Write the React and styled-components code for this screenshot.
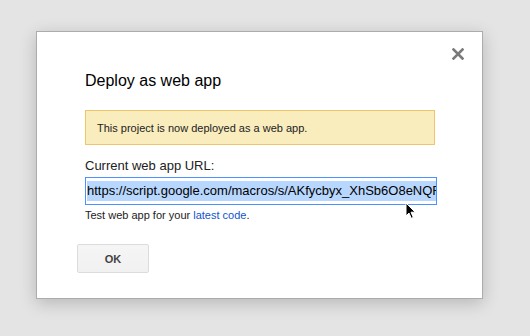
import React from "react";
import styled, { createGlobalStyle } from "styled-components";

const Global = createGlobalStyle`
  html, body {
    margin: 0;
    padding: 0;
    background: #e4e4e4;
    font-family: "Liberation Sans", Arial, sans-serif;
  }
  #root {
    width: 530px;
    height: 336px;
    overflow: hidden;
  }
`;

const Page = styled.div`
  width: 530px;
  height: 336px;
  padding: 31px 0 0 36px;
  box-sizing: border-box;
`;

const Dialog = styled.div`
  position: relative;
  width: 447px;
  height: 268px;
  box-sizing: border-box;
  background: #fff;
  border: 1px solid #acacac;
  box-shadow: 0 4px 16px rgba(0, 0, 0, 0.2);
  padding: 40px 47px 0 48px;
  display: flex;
  flex-direction: column;
`;

const Close = styled.button`
  position: absolute;
  top: 14px;
  right: 16px;
  width: 16px;
  height: 16px;
  padding: 0;
  border: 0;
  background: none;
  cursor: pointer;
  display: flex;
  align-items: center;
  justify-content: center;
`;

const Title = styled.h2`
  margin: 0;
  font-size: 16px;
  line-height: 18px;
  font-weight: normal;
  color: #000;
`;

const Notice = styled.div`
  margin-top: 20px;
  height: 35px;
  box-sizing: border-box;
  background: #f9edbe;
  border: 1px solid #f0c36d;
  padding: 0 11px;
  display: flex;
  align-items: center;
  font-size: 11px;
  color: #222;
`;

const Label = styled.div`
  margin-top: 13px;
  font-size: 13px;
  line-height: 16px;
  color: #222;
`;

const UrlBox = styled.div`
  margin-top: 3px;
  width: 352px;
  height: 28px;
  box-sizing: border-box;
  border: 1px solid #4d90fe;
  padding: 0 1px;
  display: flex;
  align-items: center;
  overflow: hidden;
  white-space: nowrap;
  font-size: 13px;
  color: #000;
`;

const Selected = styled.span`
  background: #b8d7fe;
  line-height: 20px;
`;

const Hint = styled.div`
  margin-top: 3px;
  font-size: 11px;
  line-height: 14px;
  color: #222;

  a {
    color: #15c;
    text-decoration: none;
  }
`;

const Actions = styled.div`
  margin-top: 22px;
  margin-left: -8px;
  display: flex;
`;

const Button = styled.button`
  width: 72px;
  height: 29px;
  box-sizing: border-box;
  border: 1px solid #dcdcdc;
  border-radius: 2px;
  background: linear-gradient(#f5f5f5, #f1f1f1);
  font-family: "Liberation Sans", Arial, sans-serif;
  font-size: 11px;
  font-weight: bold;
  color: #444;
  cursor: default;
`;

const Cursor = styled.svg`
  position: absolute;
  left: 368px;
  top: 170px;
`;

export default function App() {
  return (
    <>
      <Global />
      <Page>
        <Dialog>
          <Close aria-label="Close">
            <svg width="12" height="12" viewBox="0 0 12 12">
              <path
                d="M1.5 1.5 L10.5 10.5 M10.5 1.5 L1.5 10.5"
                stroke="#7a7a7a"
                strokeWidth="2.6"
                strokeLinecap="square"
              />
            </svg>
          </Close>
          <Title>Deploy as web app</Title>
          <Notice>This project is now deployed as a web app.</Notice>
          <Label>Current web app URL:</Label>
          <UrlBox>
            <Selected>
              https://script.google.com/macros/s/AKfycbyx_XhSb6O8eNQFxQzZ7rJ2bA4/exec
            </Selected>
          </UrlBox>
          <Hint>
            Test web app for your <a href="#">latest code</a>.
          </Hint>
          <Actions>
            <Button>OK</Button>
          </Actions>
          <Cursor width="12" height="18" viewBox="0 0 12 18">
            <path
              d="M1 1 L1 14 L4 11 L6.3 16.3 L8.3 15.4 L6 10.2 L10.2 10.2 Z"
              fill="#000"
              stroke="#fff"
              strokeWidth="1"
              strokeLinejoin="round"
            />
          </Cursor>
        </Dialog>
      </Page>
    </>
  );
}
